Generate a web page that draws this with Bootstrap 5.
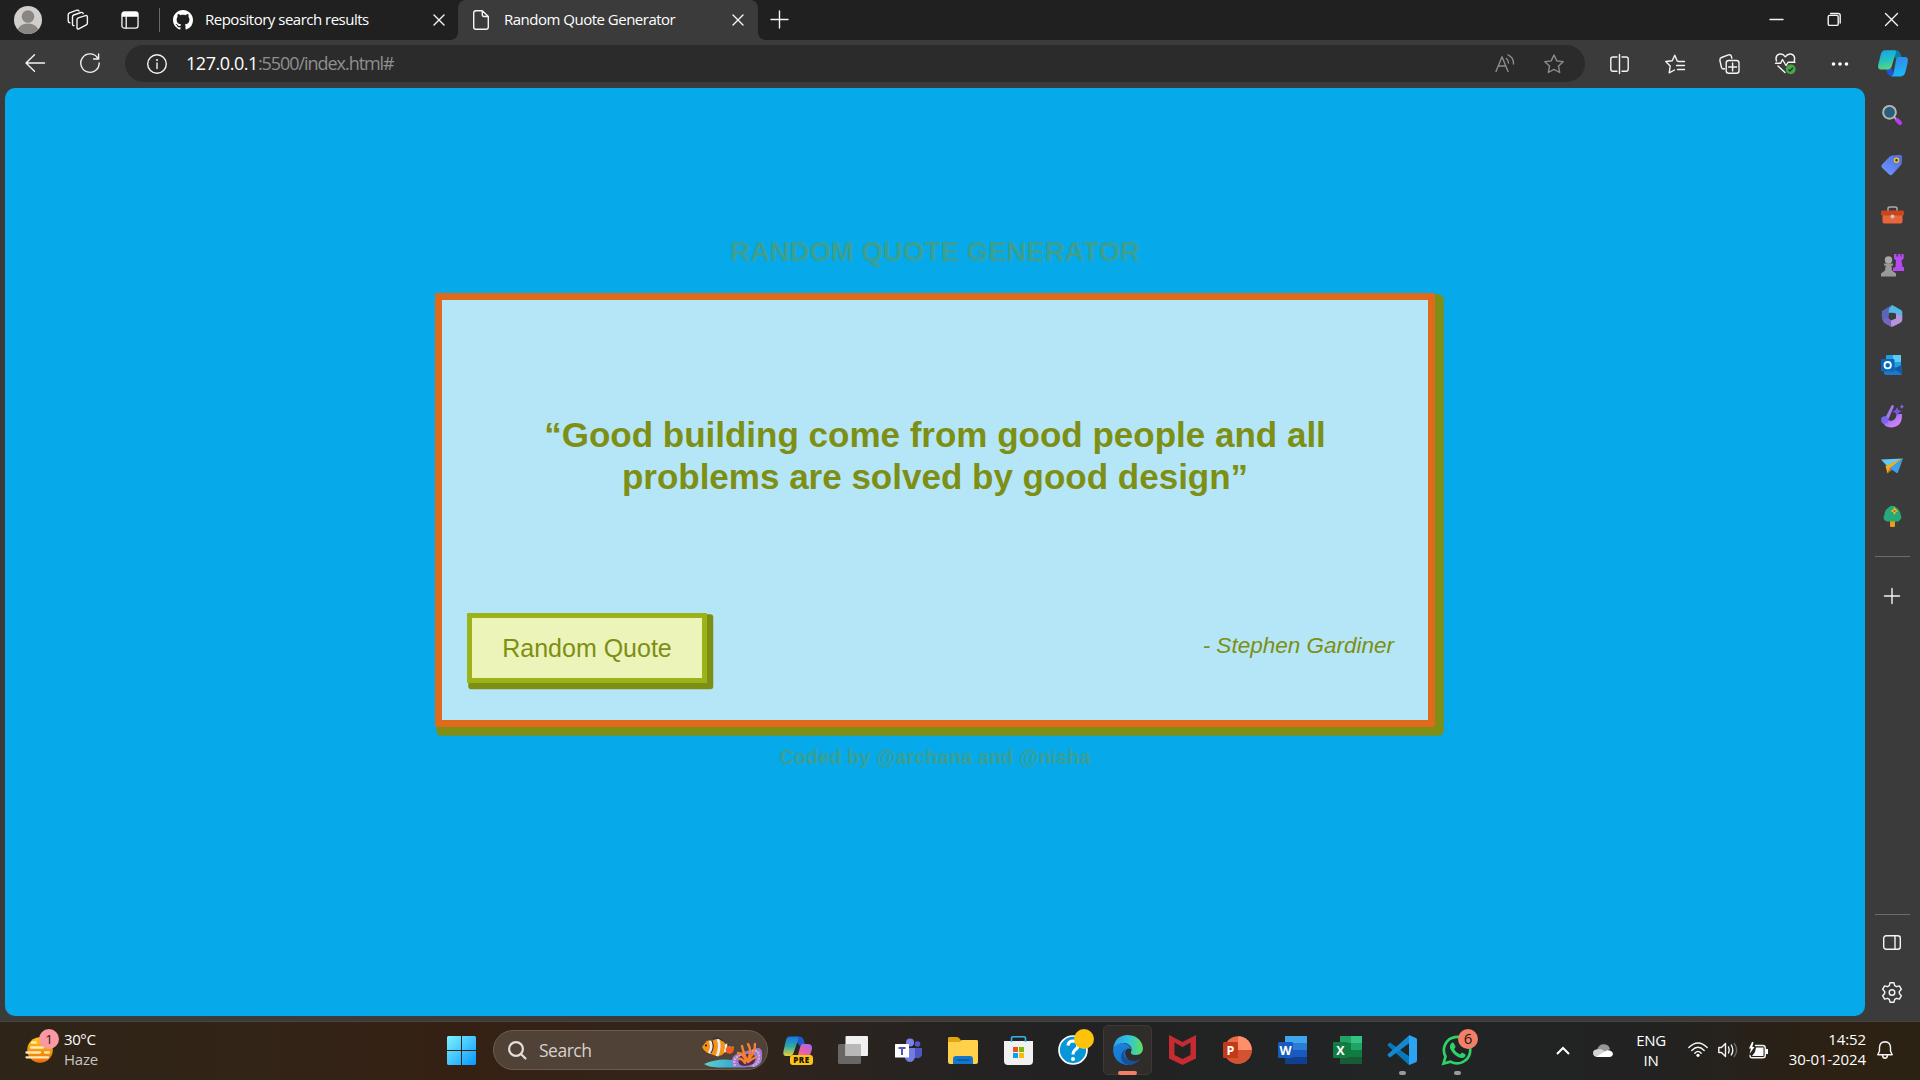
<!DOCTYPE html>
<html lang="en">
<head>
<meta charset="utf-8">
<meta name="viewport" content="width=device-width, initial-scale=1">
<title>Random Quote Generator</title>
<link href="https://cdn.jsdelivr.net/npm/bootstrap@5.3.0/dist/css/bootstrap.min.css" rel="stylesheet">
<style>
  :root { --chrome:#3b3b3b; --olive:#7d8f14; }
  html, body { height:100%; }
  body { background:var(--chrome); color:#fff; font-family:"Open Sans","Noto Sans",sans-serif; overflow:hidden; }
  svg { display:block; flex:none; overflow:visible; }
  .ln { fill:none; stroke:#f4f4f4; stroke-width:1.4; stroke-linecap:round; stroke-linejoin:round; }
  .dim { stroke:#8c8c8c; }
  /* tab strip */
  .tabstrip { height:40px; background:#202020; }
  .tabsep { width:1px; height:24px; background:#6a6a6a; }
  .tabtext { font-size:15px; line-height:20px; letter-spacing:-.5px; white-space:nowrap; padding-bottom:2px; }
  .tab-idle { width:296px; height:40px; padding:0 12px 0 13px; }
  .tab-open { width:300px; height:40px; background:var(--chrome); border-radius:8px 8px 0 0; padding:0 15px 0 15px; position:relative; }
  .tab-open::before, .tab-open::after { content:""; position:absolute; bottom:0; width:7px; height:7px; }
  .tab-open::before { left:-7px; background:radial-gradient(circle at 0 0,#202020 6.5px,var(--chrome) 7px); }
  .tab-open::after { right:-7px; background:radial-gradient(circle at 100% 0,#202020 6.5px,var(--chrome) 7px); }
  /* toolbar */
  .toolbar { height:48px; background:var(--chrome); }
  .omnibox { width:1460px; height:37px; margin-top:5px; border-radius:19px; background:#2b2b2b; padding:0 21px 0 22px; }
  .url { font-size:18px; line-height:24px; letter-spacing:-1.05px; color:#8f8f8f; padding-bottom:1px; }
  .url span { color:#fff; letter-spacing:-.45px; }
  .tools { padding:5px 12px 0 7px; height:42px; }
  .tool { width:55.2px; }
  /* page */
  .workarea { height:933px; padding-left:5px; }
  .page { width:1860px; height:928px; border-radius:10px; background:#06aaea; padding-top:147px; font-family:"Liberation Sans",Arial,sans-serif; }
  .page-title { font-size:27.5px; line-height:33px; font-weight:700; color:#3b9f92; margin:0 0 25px; }
  .quote-box { width:1000px; height:434px; border:7px solid #e06a1c; border-radius:2px; background:#b5e6f7; box-shadow:5px 5px 0 3.75px var(--olive); color:var(--olive); padding:114px 34px 0 25px; }
  .quote-text { font-size:35px; line-height:42px; font-weight:700; margin:0 60px 115px 69px; }
  .quote-btn, .quote-btn:hover { width:240px; height:70px; border:5px solid #9cb317; border-radius:1px; background:#ecf4b9; color:var(--olive); box-shadow:3.75px 3.75px 0 2.5px var(--olive); font-size:25px; line-height:30px; padding:0; }
  .author { font-size:22.5px; line-height:27px; font-style:italic; margin-bottom:5px; }
  .credit { font-size:20px; line-height:24px; font-weight:700; color:#3b9f92; margin-top:18px; }
  /* sidebar */
  .sidebar { width:55px; padding:2px 1px 0 0; }
  .slot { height:50.15px; width:54px; }
  .rule { width:35px; height:1px; background:#6c6c6c; }
  /* taskbar */
  .taskbar { height:59px; padding-bottom:2px; border-top:1px solid #4a4440; background:linear-gradient(90deg,#2e2418 0,#322417 250px,#352114 460px,#33241a 700px,#262322 930px,#222 1100px,#222425 1400px,#222 1650px,#2c2113 1830px,#2c2213 100%); }
  .weather { width:434px; padding-left:25px; }
  .wtext { font-size:15px; line-height:20px; letter-spacing:-.4px; }
  .haze { color:#c9c5c0; letter-spacing:-.25px; }
  .searchpill { width:275px; height:40px; border:1px solid #6b5c50; border-radius:20px; background:#504236; padding:0 4px 0 14px; color:#d6d1cd; font-size:17.5px; letter-spacing:-.5px; }
  .app { width:54.9px; height:56px; position:relative; }
  .live::before { content:""; position:absolute; left:3px; top:3px; width:49px; height:50px; border-radius:5px; border:1px solid #3c3937; background:#302c2a; }
  .app svg { position:relative; }
  .run::after { content:""; position:absolute; bottom:3px; left:24px; width:7px; height:4px; border-radius:2px; background:#9a9a9a; }
  .live.run::after { left:18px; width:19px; background:#f37f68; }
  .tray { font-size:15px; line-height:20px; letter-spacing:-.3px; }
  .tray .lang { width:40px; margin:0 17px 0 18px; padding-bottom:1px; }
  .clock { width:97px; letter-spacing:-.1px; padding-bottom:2px; }
  .ico-t { font-family:"Open Sans",sans-serif; font-weight:700; fill:#fff; }
</style>
<script src="https://cdn.jsdelivr.net/npm/bootstrap@5.3.0/dist/js/bootstrap.bundle.min.js"></script>
</head>
<body class="d-flex flex-column">

<header class="tabstrip d-flex align-items-center flex-shrink-0">
  <svg width="28" height="28" style="margin-left:14px" viewBox="0 0 28 28"><defs><clipPath id="av"><circle cx="14" cy="14" r="14"/></clipPath></defs><circle cx="14" cy="14" r="14" fill="#d1cfcc"/><g clip-path="url(#av)" fill="#8a8684"><circle cx="14" cy="10.5" r="6.3"/><ellipse cx="14" cy="25" rx="10.5" ry="7.4"/></g></svg>
  <svg class="ln" width="22" height="22" style="margin-left:25px" viewBox="0 0 22 22"><path d="M11.200 8.800 18.600 6.600Q20.400 6.200 20.400 8V14Q20.400 15.200 19.300 15.800L11.800 19.800Q10 20.400 10 18.800V10.600Q10 9.300 11.200 8.800ZM7 16.600Q5.500 16.800 5.500 15V8Q5.500 6.600 6.700 6L14 3.500Q15.700 3 16.200 4.500M2.800 13.800Q1.200 13.500 1.200 12V5.800Q1.200 4.500 2.500 3.900L10 1.200Q11.500 .8 12 2"/></svg>
  <svg width="18" height="18" style="margin-left:32px" viewBox="0 0 19 19"><rect class="ln" x="1" y="1" width="17" height="17" rx="2.500"/><path d="M1 3Q1 1 3 1H16Q18 1 18 3V6H1Z" fill="#fff"/><path class="ln" d="M5.500 6V18"/></svg>
  <div class="tabsep" style="margin-left:20px"></div>
  <div class="tab-idle d-flex align-items-center flex-shrink-0">
    <svg width="20" height="20" viewBox="0 0 16 16" fill="#fff"><path d="M8 0C3.580 0 0 3.580 0 8c0 3.540 2.290 6.530 5.470 7.590.4.070.55-.17.55-.38 0-.19-.01-.82-.01-1.490-2.010.37-2.530-.49-2.690-.94-.09-.23-.48-.94-.82-1.130-.28-.15-.68-.52-.01-.53.63-.01 1.080.58 1.230.82.72 1.210 1.870.87 2.330.66.07-.52.28-.87.51-1.070-1.780-.2-3.640-.89-3.640-3.950 0-.87.31-1.590.82-2.150-.08-.2-.36-1.020.08-2.120 0 0 .67-.21 2.200.82.640-.18 1.320-.27 2-.27s1.360.09 2 .27c1.530-1.040 2.200-.82 2.200-.82.44 1.100.16 1.920.08 2.120.51.56.82 1.270.82 2.150 0 3.070-1.870 3.750-3.650 3.950.29.25.54.73.54 1.480 0 1.070-.01 1.930-.01 2.200 0 .21.15.46.55.38A8.010 8.010 0 0 0 16 8c0-4.420-3.580-8-8-8Z"/></svg>
    <span class="tabtext ms-2 ps-1">Repository search results</span>
    <svg class="ln ms-auto" width="10" height="10" viewBox="0 0 10 10"><path d="M0 0 10 10M10 0 0 10"/></svg>
  </div>
  <div style="width:2px"></div>
  <div class="tab-open d-flex align-items-center flex-shrink-0">
    <svg class="ln" width="16" height="20" viewBox="0 0 16 20"><path d="M3 .7H9.300L15.300 6.500V17Q15.300 19.300 13 19.300H3Q.7 19.300 .7 17V3Q.7 .7 3 .7ZM9.300 1V5Q9.300 6.500 11 6.500H15"/></svg>
    <span class="tabtext" style="margin-left:15px">Random Quote Generator</span>
    <svg class="ln ms-auto" width="10" height="10" viewBox="0 0 10 10"><path d="M0 0 10 10M10 0 0 10"/></svg>
  </div>
  <svg class="ln" width="17" height="17" style="margin:0 0 1px 13px" viewBox="0 0 17 17"><path d="M8.500 0V17M0 8.500H17"/></svg>
  <div class="d-flex align-items-center ms-auto" style="margin-right:22px;padding-bottom:1px;gap:44.500px">
    <svg width="13" height="13"><path class="ln" d="M0 6.500H13"/></svg>
    <svg class="ln" width="13" height="13" viewBox="0 0 13 13"><rect x=".2" y="2.400" width="10" height="10" rx="1.500"/><path d="M2.600 .5H10Q12.200 .5 12.200 2.600V10"/></svg>
    <svg class="ln" width="13" height="13" viewBox="0 0 13 13"><path d="M.5 .5 12.500 12.500M12.500 .5 .5 12.500"/></svg>
  </div>
</header>

<nav class="toolbar d-flex flex-shrink-0">
  <div class="d-flex align-items-center" style="width:125px;padding:4px 0 0 25px;height:42px">
    <svg class="ln" width="20" height="18" viewBox="0 0 20 18"><path d="M19.500 9H1M9.500 .8 1 9 9.500 17.200"/></svg>
    <svg class="ln" width="20" height="20" style="margin-left:35px" viewBox="0 0 20 20"><path d="M17.300 4.500A9.200 9.200 0 1 0 19.200 10M18.600 1V6H13.600"/></svg>
  </div>
  <div class="omnibox d-flex align-items-center flex-shrink-0">
    <svg class="ln" width="20" height="20" viewBox="0 0 20 20"><circle cx="10" cy="10" r="9.300"/><path d="M10 9V14.500"/><circle cx="10" cy="6" r=".4"/></svg>
    <span class="url" style="margin-left:19px"><span>127.0.0.1</span>:5500/index.html#</span>
    <svg class="ln dim ms-auto" width="20" height="20" viewBox="0 0 20 20"><path d="M1 17.500 7 2.800 13 17.500M3.200 12H10.800M11.300 4.500Q13.500 6.300 13.500 9M13 .9Q18.800 3.500 18.500 10"/></svg>
    <svg class="ln dim" width="20" height="20" style="margin-left:29px" viewBox="0 0 20 20"><path d="M10 1 12.800 6.900 19.200 7.700 14.500 12.100 15.700 18.500 10 15.400 4.300 18.500 5.500 12.100 .8 7.700 7.200 6.900Z"/></svg>
  </div>
  <div class="tools d-flex align-items-center flex-fill">
    <div class="tool d-flex justify-content-center"><svg class="ln" width="19" height="20" viewBox="0 0 19 20"><path d="M7 3H3Q.8 3 .8 5V15Q.8 17.300 3 17.300H7M12 3H16Q18.200 3 18.200 5V15Q18.200 17.300 16 17.300H12M9.500 .5V19.500"/></svg></div>
    <div class="tool d-flex justify-content-center"><svg class="ln" width="20" height="20" viewBox="0 0 20 20"><path d="M12.800 7.200 12.200 7 9.800 1.200 7.200 6.700 .8 7.500 5.200 12 4.200 18.800 9.500 16M13.500 7.500H19.500M11.500 11.500H19.500M12.500 15.500H19.500"/></svg></div>
    <div class="tool d-flex justify-content-center"><svg class="ln" width="21" height="20" viewBox="0 0 21 20"><rect x="7.200" y="6.500" width="12.800" height="12.800" rx="2.500"/><path d="M13.600 9V17M9.600 13H17.600M5.500 14.800 4.500 15Q3 15 2.500 13.500L.9 6.500Q.6 4.300 2.500 3.500L9.500 .9Q11.800 .4 12.500 2.500L12.800 4.200"/></svg></div>
    <div class="tool d-flex justify-content-center"><svg width="21" height="21" viewBox="0 0 21 21"><path class="ln" d="M1.500 8Q-.2 3 4 1.200 8 .2 10.300 3.800 12.800 .2 16.600 1.200 20.800 3 19.200 8M.5 10.300H5.500L7.500 6.500 11 12.500 13 9.300H20M3 13 10 19.500"/><circle cx="15.700" cy="16.300" r="4.900" fill="#45a64a"/><path d="M13.500 16.500 15 18 18 14.800" fill="none" stroke="#163d18" stroke-width="1.300"/></svg></div>
    <div class="tool d-flex justify-content-center"><svg width="18" height="4" viewBox="0 0 18 4" fill="#fff"><circle cx="2.500" cy="2" r="1.800"/><circle cx="9" cy="2" r="1.800"/><circle cx="15.500" cy="2" r="1.800"/></svg></div>
    <svg class="ms-auto" width="30" height="27" viewBox="0 0 30 27"><defs><linearGradient id="c1" x2=".2" y2="1"><stop stop-color="#14a5e6"/><stop offset=".55" stop-color="#22bfc3"/><stop offset="1" stop-color="#56d484"/></linearGradient><linearGradient id="c2" x2=".2" y2="1"><stop stop-color="#3386e4"/><stop offset="1" stop-color="#19b7fa"/></linearGradient></defs><path d="M15 .2H18Q21 0 22.500 4L24 7.500 19 9 16 7Z" fill="#077fa5"/><path d="M8 19 14 19 17 26H13Q9.500 26 8 19Z" fill="#2351da"/><path d="M7 .2H16.500Q18.500 .2 17.800 2.800L13.500 17Q12.500 19.500 10 19.500H3Q-.6 19.500 .2 15L2.600 5Q3.700 .2 7 .2Z" fill="url(#c1)"/><path d="M20 7H27Q30.500 7 29.800 12L27.500 21.500Q26.300 26.400 22.500 26.400H13Q15 26 15.500 23.500L18 10Q18.700 7 20 7Z" fill="url(#c2)"/></svg>
  </div>
</nav>

<div class="workarea d-flex flex-shrink-0">
  <main class="page d-flex flex-column align-items-center flex-shrink-0">
    <h1 class="page-title">RANDOM QUOTE GENERATOR</h1>
    <section class="quote-box">
      <p class="quote-text text-center">“Good building come from good people and all problems are solved by good design”</p>
      <div class="d-flex align-items-center justify-content-between">
        <button class="btn quote-btn" type="button">Random Quote</button>
        <span class="author">- Stephen Gardiner</span>
      </div>
    </section>
    <div class="credit">Coded by @archana and @nisha</div>
  </main>

  <aside class="sidebar d-flex flex-column align-items-center">
    <div class="slot d-flex align-items-center justify-content-center"><svg width="20" height="20" viewBox="0 0 20 20"><path d="M15 15 18 18" stroke="#b93cf5" stroke-width="4" stroke-linecap="round"/><path d="M11 11 14 14" stroke="#aaa" stroke-width="2"/><circle cx="7.500" cy="7.300" r="6.400" fill="#285f7d" stroke="#bcb7b2" stroke-width="1.900"/></svg></div>
    <div class="slot d-flex align-items-center justify-content-center"><svg width="22" height="22" viewBox="0 0 22 22"><defs><linearGradient id="tg" x1="1" x2="0" y2="1"><stop stop-color="#5068de"/><stop offset="1" stop-color="#6e9bff"/></linearGradient></defs><path d="M11 1.500 19 .8Q21 .8 21.200 3L20.700 9Q20.600 10.500 19.500 11.600L11.500 20.300Q9.800 22 8 20.300L1 13.800Q-.4 12.200 1 10.600L8.500 2.800Q9.500 1.700 11 1.500Z" fill="url(#tg)"/><circle cx="15.500" cy="6.300" r="2" fill="#352a18" stroke="#f3c918" stroke-width="1.500"/></svg></div>
    <div class="slot d-flex align-items-center justify-content-center"><svg width="23" height="18" viewBox="0 0 23 18"><path d="M7 5V2.500Q7 1 9 1H14Q16 1 16 2.500V5" fill="none" stroke="#aaa" stroke-width="1.500"/><path d="M1.500 8H21.500V15.500Q21.500 17.500 19.500 17.500H3.500Q1.500 17.500 1.500 15.500Z" fill="#e9663c"/><rect y="4.500" width="23" height="5" rx="1.500" fill="#c9461d"/><circle cx="11.500" cy="10.500" r="2" fill="#c9c5c0"/></svg></div>
    <div class="slot d-flex align-items-center justify-content-center"><svg width="23" height="24" viewBox="0 0 23 24"><path d="M13 1H15.500V3.500H17V1H19.500V3.500H20.500V1H22.700V5.500L20.500 7.500 21.500 14H23V18H12V15L14.500 14 15 7.500 13 5.500Z" fill="#b44af0"/><circle cx="7.500" cy="7" r="3.700" fill="#aaa8a6"/><path d="M3 10.500H12V12.500H10.500L11 17.500 15 20.500V23.500H0V20.500L4 17.500 4.700 12.500H3Z" fill="#9b9997"/></svg></div>
    <div class="slot d-flex align-items-center justify-content-center"><svg width="22" height="22" viewBox="0 0 22 22"><path d="M1 6 9 1Q11-.2 13.500 1.200L17 3.500 8 8.500 7 17 1.500 14Q.5 13 .7 11Z" fill="#5866b9"/><path d="M11 0 20 5Q21.500 6 21.300 8V12L13.500 8 7.500 7.500 8 4Z" fill="#52b8e5"/><path d="M21.300 11V15Q21 17 19 18L12 21.500Q10.500 22 9 21L3 17.500 7 13.500 10 15.500 15 13.500 15 8.500Z" fill="#b494db"/><path d="M1 14 7 12.500 10 15.700 10 21.500 3 17.700Z" fill="#7961c1"/></svg></div>
    <div class="slot d-flex align-items-center justify-content-center"><svg width="22" height="21" viewBox="0 0 22 21"><rect x="5" y="0" width="15" height="15" rx="1" fill="#289ddd"/><path d="M12 0H20V7H12Z" fill="#59cbf4"/><path d="M3 12H21V18.500Q21 20 19 20H5Q3 20 3 18Z" fill="#1d79c6"/><path d="M13 14 21 9.500V19Z" fill="#135aa3"/><rect x="0" y="4" width="13.500" height="12.500" rx="1.200" fill="#0867bd"/><circle cx="6.700" cy="10.200" r="3.200" fill="none" stroke="#fff" stroke-width="1.800"/></svg></div>
    <div class="slot d-flex align-items-center justify-content-center"><svg width="23" height="24" viewBox="0 0 23 24"><defs><linearGradient id="ds" x2="1" y2="1"><stop stop-color="#7763e8"/><stop offset="1" stop-color="#eb8bff"/></linearGradient></defs><path d="M4 13Q7 17.500 11.500 16.500 15.500 15 15.500 10H21Q21.500 22.500 10.500 23.500 2.500 23.300 1 16Z" fill="url(#ds)"/><path d="M10.500 1.500Q12.500 0 13 2.500L7.500 15 4 14.500Z" fill="#a878ee"/><circle cx="3.800" cy="16" r="3.700" fill="#7668e8"/><path d="M16 3 17.500 6 20.500 7 17.500 9 16 12 14.500 9 11.500 7.500 14.500 6Z" fill="#7454dd"/><path d="M21 0 21.700 2 23 2.700 21.700 3.500 21 5 20 3.500 18.700 2.700 20 2Z" fill="#8d61e8"/></svg></div>
    <div class="slot d-flex align-items-center justify-content-center"><svg width="22" height="16" viewBox="0 0 22 16"><path d="M0 1.500 22 .5 6 8Z" fill="#68c8f3"/><path d="M22 .5 4.500 8 6.500 15.500 9 10.500Z" fill="#f4ae1c"/><path d="M6.500 15.500 11 12 8.500 10Z" fill="#c17a13"/><path d="M22 .5 8.500 10.200 16.500 15.500Z" fill="#3d9eea"/></svg></div>
    <div class="slot d-flex align-items-center justify-content-center"><svg width="19" height="22" viewBox="0 0 19 22"><rect x="7" y="14" width="5" height="8" rx="1" fill="#ec9a19"/><path d="M5 3Q9-1.500 14 3 17.500 6 17.500 9.500 20 14 15 16.500H4Q-1.300 14.500 1.500 9.500 1.500 5.500 5 3Z" fill="#28a978"/><path d="M11.500 2 12.800 4.500 15 6 12.800 7.300 11.500 10 10.200 7.300 7.500 6 10.200 4.500Z" fill="#ffb521"/><circle cx="11.500" cy="6" r="1.100" fill="#b75c11"/></svg></div>
    <div class="rule" style="margin-top:15px"></div>
    <svg class="ln" style="margin-top:31px" width="16" height="16" viewBox="0 0 16 16"><path d="M8 .5V15.500M.5 8H15.500"/></svg>
    <div class="rule mt-auto"></div>
    <svg class="ln" style="margin:20px 0 32px" width="18" height="15" viewBox="0 0 18 15"><rect x=".7" y=".7" width="16.600" height="13.600" rx="2.500"/><path d="M12 .7V14.300"/></svg>
    <svg class="ln" style="margin-bottom:18px" width="20" height="21" viewBox="0 0 20 21"><circle cx="10" cy="10.500" r="2.800"/><path d="M8 .8H12L12.700 3.600 14.600 4.700 17.400 3.900 19.400 7.300 17.300 9.400V11.600L19.400 13.700 17.400 17.100 14.600 16.300 12.700 17.400 12 20.200H8L7.300 17.400 5.400 16.300 2.600 17.100 .6 13.700 2.700 11.600V9.400L.6 7.300 2.600 3.900 5.400 4.700 7.300 3.600Z"/></svg>
  </aside>
</div>

<footer class="taskbar d-flex align-items-center flex-shrink-0">
  <div class="weather d-flex align-items-center">
    <svg width="34" height="36" style="margin-bottom:9px" viewBox="0 0 34 36"><defs><linearGradient id="sun" x2="0" y2="1"><stop stop-color="#ffc70f"/><stop offset="1" stop-color="#ed6c0c"/></linearGradient></defs><circle cx="15" cy="22" r="12.800" fill="url(#sun)"/><g stroke="#fde9b4" stroke-width="2.300" stroke-linecap="round"><path d="M7 14.500H11M6 19.500H18M1.500 24.500H15M20 24.500H24M1.500 29.300H23"/></g><circle cx="24" cy="11" r="10" fill="#fb98a2"/><text x="24" y="16" text-anchor="middle" font-size="13.500" fill="#261c1c">1</text></svg>
    <div class="d-flex flex-column" style="margin-left:5px;padding-bottom:3px"><span class="wtext">30°C</span><span class="wtext haze">Haze</span></div>
  </div>
  <div class="d-flex justify-content-center" style="width:59px;padding-right:4px"><svg width="29" height="29" viewBox="0 0 29 29"><defs><linearGradient id="wn" x2="1" y2="1"><stop stop-color="#7ff2ff"/><stop offset="1" stop-color="#0797ff"/></linearGradient></defs><path d="M1 0H14V14H0V1ZM15 0H28L29 1V14H15ZM0 15H14V29H1L0 28ZM15 15H29V28L28 29H15Z" fill="url(#wn)"/></svg></div>
  <div class="searchpill d-flex align-items-center flex-shrink-0">
    <svg width="19" height="19" viewBox="0 0 19 19" fill="none" stroke="#e2dedb" stroke-width="2.200" stroke-linecap="round"><circle cx="8" cy="8" r="6.900"/><path d="M13 13 17.500 17.500"/></svg>
    <span style="margin-left:12px">Search</span>
    <svg class="ms-auto" width="61" height="38" viewBox="0 0 61 38"><defs><linearGradient id="sea" x2="1"><stop stop-color="#5ecfd0"/><stop offset="1" stop-color="#2a97cf"/></linearGradient></defs><path d="M2 33Q15 27 30 29L44 36.500H16Q6 36 2 33Z" fill="url(#sea)"/><path d="M0 16 3 12Q5 8 10 10L14 8Q21 8 24 14L30 16Q33 13 31 21L24 20Q20 26 14 25L9 23Q3 22 0 16Z" fill="#f69216"/><path d="M8 10Q11 16 7 22M16 8Q19 16 15 25M24 13Q25 16 23 21" fill="none" stroke="#e9edf5" stroke-width="2.600"/><path d="M10 10Q13 16 9 22M11 8Q15 5 21 10M26 13V21" fill="none" stroke="#2b2937"/><circle cx="4" cy="14.500" r="1" fill="#111"/><circle cx="27.500" cy="19" r="3.800" fill="#f15b20"/><path d="M31 36Q27 24 38 22L52 18Q61 14 60 25 61 33 53 36Z" fill="#9c7bcf"/><path d="M33 35Q30 26 39 25M50 20Q57 18 57 26 57 33 50 35" fill="none" stroke="#d3afe8" stroke-width="2.400" stroke-dasharray="2 1"/><path d="M36 28Q38 22 51 23 56 27 51 33 41 37 37 33Z" fill="#51284e"/><path d="M44 30Q42 23 36 22M45 30Q41 20 40 15M46 29Q50 19 46 13M47 28Q53 22 53 13M46 31Q50 28 54 26M43 32Q40 27 37 28" fill="none" stroke="#f58032" stroke-width="2.400" stroke-linecap="round"/></svg>
  </div>
  <div class="d-flex" style="margin-left:3px">
    <div class="app d-flex align-items-center justify-content-center"><svg width="30" height="29" viewBox="0 0 30 29"><defs><linearGradient id="p1" x2="0" y2="1"><stop stop-color="#1776dc"/><stop offset=".5" stop-color="#2ca9a8"/><stop offset="1" stop-color="#e8d33a"/></linearGradient><linearGradient id="p2" x1="1" x2="0" y2="1"><stop stop-color="#a364ee"/><stop offset=".6" stop-color="#ee629f"/><stop offset="1" stop-color="#f89a60"/></linearGradient></defs><path d="M11 .5H17Q20 1 21 5L22 8 17 10 13 5Z" fill="#1b5ad2"/><path d="M6 .5H13.500Q16 .5 15 4L10.500 17Q9.500 20 7 20H3Q-.5 20 .5 15L3 4Q4 .5 6 .5Z" fill="url(#p1)"/><path d="M19 8H25Q29.500 8 29 13L26.500 21H11L15 19 17.500 10Z" fill="url(#p2)"/><rect x="7" y="19" width="23" height="10" rx="3" fill="#fac516"/><text x="18.500" y="26.900" text-anchor="middle" font-size="8" letter-spacing=".5" style="font-family:'Open Sans',sans-serif;font-weight:800" fill="#1c1500">PRE</text></svg></div>
    <div class="app d-flex align-items-center justify-content-center"><svg width="30" height="28" viewBox="0 0 30 28"><rect y="8" width="23" height="20" rx="1.500" fill="#696766"/><rect x="7.500" width="22.500" height="20" rx="1" fill="#f0f0f0"/><path d="M7.500 8H23V20H7.500Z" fill="#b8b8b8"/></svg></div>
    <div class="app d-flex align-items-center justify-content-center"><svg width="27" height="25" viewBox="0 0 27 25"><circle cx="22.500" cy="6" r="2.800" fill="#5059c9"/><path d="M18 10H27V17Q26 20.500 22 20H18Z" fill="#4d56bf"/><circle cx="15" cy="4.500" r="4" fill="#7b83eb"/><path d="M9 10H20V19Q19 24 15 24 11 24 9.500 19Z" fill="#737ce0"/><rect y="6" width="14" height="13.500" rx=".5" fill="#fff"/><path d="M3.500 9H10.500V10.900H8V17H6V10.900H3.500Z" fill="#4e57bd"/></svg></div>
    <div class="app d-flex align-items-center justify-content-center"><svg width="30" height="27" viewBox="0 0 30 27"><path d="M0 8V1Q0 0 1.500 0H9Q10.500 0 11.500 1.500L13 3.500V8Z" fill="#e0a60d"/><path d="M0 5H11L14 3H29Q30 3 30 4.500V25Q30 27 28 27H2Q0 27 0 25Z" fill="#ffd04a"/><path d="M5 27V22Q5 19 8 19H22Q25 19 25 22V27Z" fill="#1178cc"/><path d="M8.500 23H21.500" stroke="#0a4e91" stroke-width="1.300"/></svg></div>
    <div class="app d-flex align-items-center justify-content-center"><svg width="29" height="29" viewBox="0 0 29 29"><path d="M0 5H29V25Q29 29 25 29H4Q0 29 0 25Z" fill="#f1f1f1"/><path d="M7.500 6V2Q7.500 .8 9 .8H20Q21.500 .8 21.500 2V6" fill="none" stroke="#2ab9ed" stroke-width="1.600"/><path d="M9 11H14V16H9Z" fill="#f15022"/><path d="M15 11H20V16H15Z" fill="#7fba00"/><path d="M9 17H14V22H9Z" fill="#00a4ef"/><path d="M15 17H20V22H15Z" fill="#ffb900"/></svg></div>
    <div class="app d-flex align-items-center justify-content-center"><svg width="30" height="30" viewBox="0 0 30 30"><circle cx="15" cy="15" r="14" fill="#0797d9" stroke="#fff" stroke-width="1.700"/><path d="M10 10.500Q10.500 6 15.300 6 20 6.300 20 10.500 20 13 17 15 15 16.500 15 19.500" fill="none" stroke="#fff" stroke-width="3.200"/><circle cx="15" cy="24" r="2" fill="#fff"/><circle cx="26" cy="4" r="10" fill="#fdc20b"/></svg></div>
    <div class="app live run d-flex align-items-center justify-content-center"><svg width="30" height="30" viewBox="0 0 30 30"><defs><linearGradient id="e1" x2="1"><stop stop-color="#2c9ee8"/><stop offset=".5" stop-color="#2fc3df"/><stop offset="1" stop-color="#5fe159"/></linearGradient><linearGradient id="e2" x2=".4" y2="1"><stop stop-color="#1d83da"/><stop offset="1" stop-color="#1078d5"/></linearGradient></defs><path d="M.2 13Q2 .2 15 0 28 .8 30 13 30 19.500 23 20 17 20 18 17 20 12 15 9 9 6 .2 13Z" fill="url(#e1)"/><path d="M.1 14Q3 8 10 8 17 9 18 14 13 12 12 18 13 27 23 27 18 31 12 29.700 0 26.500 .1 14Z" fill="url(#e2)"/><path d="M14 14Q10 16 11.500 21 14 26.500 23 26 26 25 28 23 24 30 15.500 30 8 29 8 21 9 15 14 14Z" fill="#174f99"/></svg></div>
    <div class="app d-flex align-items-center justify-content-center"><svg width="27" height="30" viewBox="0 0 27 30"><path d="M0 0 13.500 7 27 0V23.500L13.500 30 0 23.500Z" fill="#c52b30"/><path d="M5.500 7.500 13.500 12 21.500 7.500V20L13.500 24 5.500 20Z" fill="#252322"/></svg></div>
    <div class="app d-flex align-items-center justify-content-center"><svg width="29" height="28" viewBox="0 0 29 28"><circle cx="15" cy="14" r="13.800" fill="#ed6c47"/><path d="M15 .2A13.800 13.800 0 0 1 28.800 14H15Z" fill="#ff8f6b"/><path d="M1.200 14H28.800A13.800 13.800 0 0 1 1.200 14Z" fill="#d35230"/><rect y="6" width="15" height="16" rx="1.200" fill="#c13b1b"/><text class="ico-t" x="7.500" y="18.500" text-anchor="middle" font-size="12.500">P</text></svg></div>
    <div class="app d-flex align-items-center justify-content-center"><svg width="29" height="28" viewBox="0 0 29 28"><path d="M7 0H29V7H7Z" fill="#41a5ee"/><path d="M7 7H29V14H7Z" fill="#2b7cd3"/><path d="M7 14H29V21H7Z" fill="#185abd"/><path d="M7 21H29V28H7Z" fill="#103f91"/><rect y="6" width="15" height="16" rx="1.200" fill="#185abd"/><text class="ico-t" x="7.500" y="18.500" text-anchor="middle" font-size="12.500">W</text></svg></div>
    <div class="app d-flex align-items-center justify-content-center"><svg width="29" height="28" viewBox="0 0 29 28"><path d="M7 0H29V14H7Z" fill="#21a366"/><path d="M18 0H29V7H18Z" fill="#33c481"/><path d="M7 7H18V21H7Z" fill="#107c41"/><path d="M18 14H29V21H18Z" fill="#107c41"/><path d="M7 21H29V28H7Z" fill="#185c37"/><rect y="6" width="15" height="16" rx="1.200" fill="#107c41"/><text class="ico-t" x="7.500" y="18.500" text-anchor="middle" font-size="12.500">X</text></svg></div>
    <div class="app run d-flex align-items-center justify-content-center"><svg width="30" height="30" viewBox="0 0 30 30"><path d="M1 9 3 7.500 30 27 22 30 .5 10.500Z" fill="#0878bd"/><path d="M1 21 3 22.500 22.500 8V0L.5 19.500Z" fill="#1489d1"/><path d="M22 0 29 3Q30 3.500 30 5V25Q30 26.500 29 27L22 30Z" fill="#2ca4f2"/><path d="M22 9V21L14.500 15Z" fill="#222425"/></svg></div>
    <div class="app run d-flex align-items-center justify-content-center"><svg width="30" height="30" viewBox="0 0 30 30"><path d="M1.500 28.500 3.500 21.500A13.200 13.200 0 1 1 8.500 26.600Z" fill="none" stroke="#2bd368" stroke-width="2.700"/><path d="M9 8.500Q11 6.500 12 8.500L13.500 11.500Q13.500 13 12 14 14 18 18 19.500L20 17.500 23.500 19.500Q24 21.500 21 23 16 23.500 11 18 6 12 9 8.500Z" fill="#2bd368"/><circle cx="26" cy="4" r="10" fill="#f37f68"/><text x="26" y="9.300" text-anchor="middle" font-size="15" fill="#26150f">6</text></svg></div>
  </div>
  <div class="tray d-flex align-items-center ms-auto" style="margin-right:27px">
    <svg width="14" height="9" viewBox="0 0 14 9"><path d="M1 8 7 2 13 8" fill="none" stroke="#fff" stroke-width="2"/></svg>
    <svg style="margin-left:23px" width="20" height="13" viewBox="0 0 20 13"><path d="M4 6Q6-.5 11.500 .2 16 1 17 5L10 9 2 10Z" fill="#969696"/><path d="M3 5.500Q8 4 11 7L19 10Q18 13 15 13H4Q0 12.500 0 9 0 6 3 5.500Z" fill="#d3d3d3"/><path d="M3 12.900 11 8 14 6.200Q19.500 6 20 10 19.500 13 16 13Z" fill="#fff"/></svg>
    <div class="lang text-center">ENG<br>IN</div>
    <svg class="ln" width="20" height="16" viewBox="0 0 20 16"><path d="M.8 5.500Q10-3.500 19.200 5.500M3.800 8.500Q10 2 16.200 8.500M6.800 11.200Q10 7.500 13.200 11.200"/><circle cx="10" cy="13.300" r="1.600" fill="#fff" stroke="none"/></svg>
    <svg class="ln" style="margin-left:10px" width="20" height="16" viewBox="0 0 20 16"><path d="M.8 5.500H3.500L7.500 1.500V14.500L3.500 10.500H.8ZM10.500 5Q12 8 10.500 11M13.300 3Q16.300 8 13.300 13"/><path d="M16.300 1.500Q21 8 16.300 14.500" stroke="#666"/></svg>
    <svg style="margin-left:10px" width="21" height="17" viewBox="0 0 21 17"><path class="ln" d="M7.500 3.500H14.500Q17.300 3.500 17.300 6V13.500Q17.300 15.700 14.800 15.700H4Q2 15.700 2 13.500"/><path d="M8 5.500H15.500V14H4L7 10Z" fill="#fff"/><path d="M18 7H20V12H18ZM4 0 1 6.500H3L1.500 12 6.500 5H4.300L5.500 0Z" fill="#fff"/></svg>
    <div class="clock text-end">14:52<br>30-01-2024</div>
    <svg class="ln" style="margin-left:11px" width="16" height="18" viewBox="0 0 16 18"><path d="M8 .8Q13.300 1 13.500 6.500V10L15.200 13.700H.8L2.500 10V6.500Q2.700 1 8 .8ZM5.500 14.500Q6 17.200 8 17.200 10 17.200 10.500 14.500"/></svg>
  </div>
</footer>
</body>
</html>
